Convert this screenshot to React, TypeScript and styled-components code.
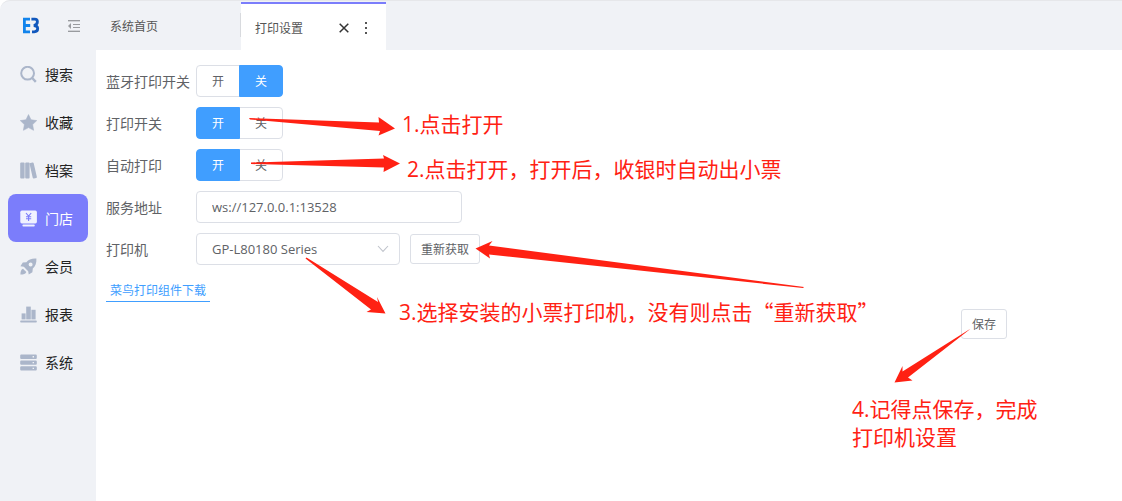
import React, { useState } from "react";
import styled, { createGlobalStyle, css } from "styled-components";

const Global = createGlobalStyle`
  *, *::before, *::after { box-sizing: border-box; }
  body {
    margin: 0;
    background: #fff;
    color: #606266;
    font-family: "Open Sans", "Noto Sans CJK SC", sans-serif;
    font-size: 14px;
  }
  button, input, select { font: inherit; color: inherit; }
`;

const Shell = styled.div`
  display: grid;
  grid-template-columns: 96px minmax(0, 1fr);
  grid-template-rows: 50px 1fr;
  min-height: 100vh;
  background: #f0f2f6;
  border-top-left-radius: 10px;
`;

const Brand = styled.div`
  display: flex;
  align-items: center;
  gap: 27px;
  padding-left: 22px;
  border-top: 1px solid #e6e7ea;
  border-top-left-radius: 10px;
`;

const IconButton = styled.button`
  display: grid;
  place-items: center;
  padding: 0;
  border: 0;
  background: none;
  color: inherit;
  cursor: pointer;
`;

const TabBar = styled.nav`
  display: flex;
  align-items: stretch;
  border-top: 1px solid #e6e7ea;
  font-size: 12px;
`;

const Tab = styled.div<{ $active?: boolean }>`
  display: flex;
  align-items: center;
  width: 145px;
  padding: 0 14px;
  ${({ $active }) =>
    $active
      ? css`
          margin-top: 1px;
          padding: 1px 14px 0;
          border-top: 2px solid #7b7dfb;
          background: #fff;
        `
      : css`
          background: linear-gradient(#d8dade, #d8dade) right 12px / 1px 24px no-repeat;
        `}
`;

const TabLink = styled.a`
  margin-right: auto;
  color: #555;
  text-decoration: none;
`;

const TabTools = styled.div`
  display: flex;
  align-items: center;
  gap: 11px;
  color: #333;
`;

const Sidebar = styled.nav`
  display: flex;
  flex-direction: column;
  padding: 0 8px;
`;

const NavItem = styled.a<{ $active?: boolean }>`
  display: flex;
  align-items: center;
  gap: 8px;
  height: 48px;
  padding-left: 12px;
  border-radius: 8px;
  text-decoration: none;
  color: ${({ $active }) => ($active ? "#fff" : "#222")};
  background: ${({ $active }) => ($active ? "#7b7dfb" : "transparent")};
  svg { color: ${({ $active }) => ($active ? "#f0f1ff" : "#abb6ca")}; }
`;

const Main = styled.main`
  position: relative;
  background: #fff;
  padding: 15px 10px;
`;

const Form = styled.form`
  display: flex;
  flex-direction: column;
  gap: 10px;
`;

const Row = styled.div`
  display: flex;
  align-items: center;
  height: 32px;
`;

const labelStyle = css`
  flex: 0 0 90px;
  white-space: nowrap;
`;
const Label = styled.label`${labelStyle}`;
const LabelText = styled.span`${labelStyle}`;

const Segments = styled.div`
  display: flex;
  height: 32px;
  font-size: 12px;
`;

const Segment = styled.button<{ $on: boolean }>`
  position: relative;
  z-index: ${({ $on }) => ($on ? 1 : 0)};
  width: 44px;
  padding: 0;
  border: 1px solid ${({ $on }) => ($on ? "#409eff" : "#dcdfe6")};
  background: ${({ $on }) => ($on ? "#409eff" : "#fff")};
  color: ${({ $on }) => ($on ? "#fff" : "#606266")};
  cursor: pointer;
  &:first-child { border-radius: 4px 0 0 4px; }
  &:last-child { border-radius: 0 4px 4px 0; margin-left: -1px; }
`;

const fieldStyle = css`
  height: 32px;
  padding: 0 15px;
  border: 1px solid #dcdfe6;
  border-radius: 4px;
  background: #fff;
  outline: none;
`;

const TextField = styled.input`
  && { font-size: 13px; }
  ${fieldStyle}
  width: 266px;
`;

const SelectWrap = styled.div`
  display: grid;
  width: 204px;
  margin-right: 10px;
  > * { grid-area: 1 / 1; }
  svg { place-self: center end; margin-right: 11px; pointer-events: none; }
`;

const Select = styled.select`
  && { font-size: 13px; }
  ${fieldStyle}
  appearance: none;
`;

const PlainButton = styled.button`
  height: 30px;
  padding: 0 10px;
  border: 1px solid #dcdfe6;
  border-radius: 3px;
  background: #fff;
  font-size: 12px;
  cursor: pointer;
`;

const Footer = styled.div`
  display: flex;
  flex-direction: column;
  gap: 7px;
  padding-top: 6px;
`;

const DownloadLink = styled.a`
  align-self: flex-start;
  padding: 0 4px;
  border-bottom: 1px solid #409eff;
  color: #409eff;
  font-size: 12px;
  line-height: 20px;
  text-decoration: none;
`;

const Actions = styled.div`
  display: flex;
  justify-content: flex-end;
  padding: 0 105px;
`;

const Arrows = styled.svg`
  position: absolute;
  z-index: 2;
  top: 0;
  left: 0;
  pointer-events: none;
  fill: #ff2113;
`;

const Note = styled.p<{ $x: number; $y: number }>`
  position: absolute;
  z-index: 2;
  left: ${({ $x }) => $x}px;
  top: ${({ $y }) => $y}px;
  margin: 0;
  color: #ff2113;
  font-size: 21px;
  line-height: 28px;
  white-space: pre;
  pointer-events: none;
`;

const WideQuote = styled.span`
  font-family: "Noto Sans CJK SC", sans-serif;
  line-height: 1;
`;

const Logo = () => (
  <svg width="18" height="18" viewBox="0 0 18 18" fill="none" aria-label="EB">
    <path d="M8 2.2H2.4V14.8H8M2.4 8.5H8.2" stroke="#1284ec" strokeWidth="2.8" />
    <path d="M9.4 2.2H12.8Q15.4 2.2 15.4 4.800Q15.4 7.800 11.800 8.500Q15.700 8.800 15.700 11.600Q15.700 14.800 12.200 14.800H10" stroke="#1158bd" strokeWidth="2.8" />
  </svg>
);

const FoldIcon = () => (
  <svg width="14" height="14" viewBox="0 0 14 14" fill="#999b9f" shapeRendering="crispEdges">
    <path d="M1 1H13V2H1ZM6 5H13V6H6ZM6 8H13V9H6ZM1 12H13V13H1Z" />
    <path d="M4 4V10L1 7Z" shapeRendering="auto" />
    <path d="M1 2H13V3H1ZM1 11H13V12H1Z" fillOpacity=".35" />
  </svg>
);

const icons: Record<string, React.ReactNode> = {
  search: (
    <g fill="none" stroke="currentColor" strokeWidth="2">
      <circle cx="7.6" cy="7.2" r="6.4" />
      <path d="M12.2 12L15.8 15.8" strokeWidth="2.4" />
    </g>
  ),
  star: <path d="M8.5.6L11 5.8L16.7 6.6L12.6 10.6L13.6 16.3L8.5 13.6L3.4 16.3L4.4 10.6L.3 6.6L6 5.8Z" stroke="currentColor" strokeWidth=".6" strokeLinejoin="round" />,
  files: (
    <>
      <rect x=".2" y=".4" width="4.4" height="16.2" rx="1" />
      <rect x="5.2" y=".4" width="4.4" height="16.2" rx="1" />
      <rect x="11" y=".5" width="4.2" height="16" rx="1" transform="rotate(-13 13 8)" />
    </>
  ),
  shop: (
    <>
      <rect x=".3" y=".6" width="16.6" height="12.8" rx="1.6" />
      <rect x="2.4" y="14.6" width="12.4" height="1.8" rx=".9" />
      <path d="M6 3L8.6 6.2L11.2 3M8.6 6.2V11M6 6.7H11.2M6 8.7H11.2" stroke="#7b7dfb" strokeWidth="1.1" fill="none" />
    </>
  ),
  rocket: (
    <>
      <path fillRule="evenodd" d="M16.4.6C11.6.3 8.6 1.7 6.4 4.2L2.8 4.6L.4 8.3L3.8 8.8L8.2 13.2L8.7 16.6L12.4 14.2L12.8 10.6C15.3 8.4 16.7 5.4 16.4.6ZM10.6 4.4A2 2 0 1 1 10.6 8.4A2 2 0 1 1 10.6 4.4Z" />
      <path d="M3 10.7C1 11.3.5 13.4.4 16.6C3.6 16.5 5.7 16 6.3 14Z" />
    </>
  ),
  chart: (
    <>
      <rect x="1.6" y="7.4" width="4" height="6" />
      <rect x="6.2" y=".6" width="4.6" height="12.8" />
      <rect x="11.4" y="3.8" width="4.2" height="9.6" />
      <rect x=".2" y="14.6" width="16.6" height="2" rx=".8" />
    </>
  ),
  server: (
    <>
      <path fillRule="evenodd" d="M1.2.6H15.8Q16.8.6 16.8 1.6V4Q16.8 5 15.8 5H1.2Q.2 5 .2 4V1.6Q.2.6 1.2.6ZM12.6 2.1V3.5H14V2.1Z" />
      <path fillRule="evenodd" d="M1.2 6.4H15.8Q16.8 6.4 16.8 7.4V9.8Q16.8 10.8 15.8 10.8H1.2Q.2 10.8.2 9.8V7.4Q.2 6.4 1.2 6.4ZM12.6 7.9V9.3H14V7.9Z" />
      <path fillRule="evenodd" d="M1.2 12.2H15.8Q16.8 12.2 16.8 13.2V15.6Q16.8 16.6 15.8 16.6H1.2Q.2 16.6.2 15.6V13.2Q.2 12.2 1.2 12.2ZM12.6 13.7V15.1H14V13.7Z" />
    </>
  ),
};

const navItems = [
  { icon: "search", text: "搜索" },
  { icon: "star", text: "收藏" },
  { icon: "files", text: "档案" },
  { icon: "shop", text: "门店", active: true },
  { icon: "rocket", text: "会员" },
  { icon: "chart", text: "报表" },
  { icon: "server", text: "系统" },
];

function SwitchRow({ label, initial }: { label: string; initial: boolean }) {
  const [on, setOn] = useState(initial);
  return (
    <Row role="group" aria-label={label}>
      <LabelText>{label}</LabelText>
      <Segments>
        <Segment type="button" $on={on} aria-pressed={on} onClick={() => setOn(true)}>开</Segment>
        <Segment type="button" $on={!on} aria-pressed={!on} onClick={() => setOn(false)}>关</Segment>
      </Segments>
    </Row>
  );
}

export default function App() {
  return (
    <>
      <Global />
      <Shell>
        <Brand>
          <Logo />
          <IconButton aria-label="收起菜单"><FoldIcon /></IconButton>
        </Brand>
        <TabBar>
          <Tab><TabLink href="#home">系统首页</TabLink></Tab>
          <Tab $active>
            <TabLink href="#print">打印设置</TabLink>
            <TabTools>
              <IconButton aria-label="关闭">
                <svg width="10" height="10" viewBox="0 0 10 10" stroke="currentColor" strokeWidth="1.5"><path d="M.7.7L9.3 9.3M9.3.7L.7 9.3" /></svg>
              </IconButton>
              <IconButton aria-label="更多">
                <svg width="12" height="12" viewBox="0 0 12 12" fill="#555"><path d="M5 0h2v2H5zM5 5h2v2H5zM5 10h2v2H5z" /></svg>
              </IconButton>
            </TabTools>
          </Tab>
        </TabBar>
        <Sidebar>
          {navItems.map((item) => (
            <NavItem key={item.icon} href={`#${item.icon}`} $active={item.active}>
              <svg width="17" height="17" viewBox="0 0 17 17" fill="currentColor">{icons[item.icon]}</svg>
              {item.text}
            </NavItem>
          ))}
        </Sidebar>
        <Main>
          <Form onSubmit={(e) => e.preventDefault()}>
            <SwitchRow label="蓝牙打印开关" initial={false} />
            <SwitchRow label="打印开关" initial />
            <SwitchRow label="自动打印" initial />
            <Row>
              <Label htmlFor="address">服务地址</Label>
              <TextField id="address" defaultValue="ws://127.0.0.1:13528" />
            </Row>
            <Row>
              <Label htmlFor="printer">打印机</Label>
              <SelectWrap>
                <Select id="printer"><option>GP-L80180 Series</option></Select>
                <svg width="12" height="8" viewBox="0 0 12 8" fill="none" stroke="#c0c4cc" strokeWidth="1.1"><path d="M1 1L6 6.4L11 1" /></svg>
              </SelectWrap>
              <PlainButton type="button">重新获取</PlainButton>
            </Row>
            <Footer>
              <DownloadLink href="#download">菜鸟打印组件下载</DownloadLink>
              <Actions><PlainButton type="submit">保存</PlainButton></Actions>
            </Footer>
          </Form>
          <Arrows width="1026" height="451" viewBox="96 50 1026 451" aria-hidden="true">
            <path d="M249 118L379 122.5L378.5 117L395 128.5L378.5 135.5L380 131L250 119.5Z" />
            <path d="M251 162.5L384 158.5L383 155L400 163.5L383.5 172L384 167.5L251 164Z" />
            <path d="M306.500 257.500L378 302L377 297L385.500 313.500L366.500 312L371 309.500L305.500 258.500Z" />
            <path d="M804 287L489 245.500L492.500 241L475.500 248.500L490 258.500L489 254.500L803 288Z" />
            <path d="M970 329L902.500 371.500L902.500 366L894.500 382.500L912.500 380.500L908 377.500L969 330Z" />
          </Arrows>
          <Note $x={306} $y={60}>1.点击打开</Note>
          <Note $x={311} $y={105}>2.点击打开，打开后，收银时自动出小票</Note>
          <Note $x={303} $y={248}>
            3.选择安装的小票打印机，没有则点击<WideQuote>“</WideQuote>重新获取<WideQuote>”</WideQuote>
          </Note>
          <Note $x={756} $y={345}>{"4.记得点保存，完成\n打印机设置"}</Note>
        </Main>
      </Shell>
    </>
  );
}
